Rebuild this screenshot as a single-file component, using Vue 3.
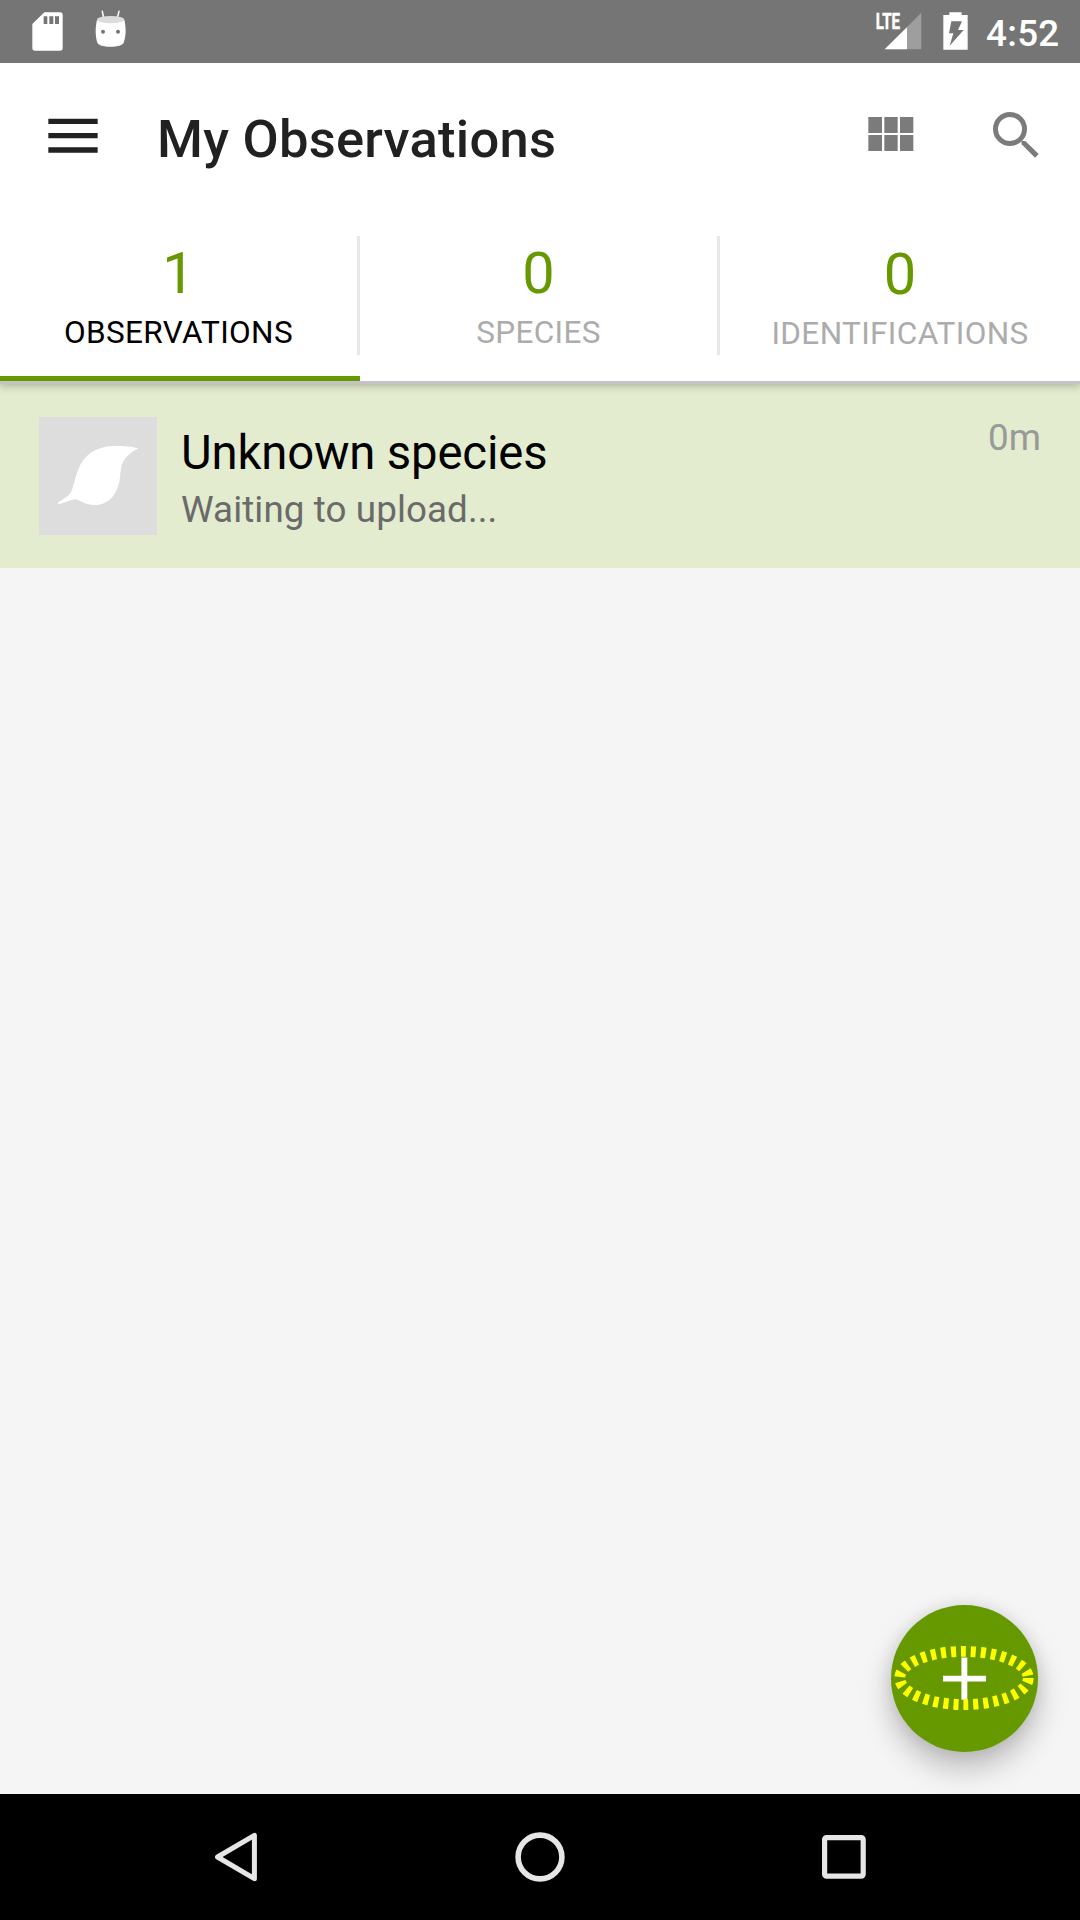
<script setup>
const tabs = [
  { count: 1, label: 'OBSERVATIONS', active: true },
  { count: 0, label: 'SPECIES' },
  { count: 0, label: 'IDENTIFICATIONS' },
]
const observations = [{ name: 'Unknown species', status: 'Waiting to upload...', age: '0m' }]
</script>

<template>
  <div class="screen">
    <header class="status">
      <svg class="sd" viewBox="96 36 93 117">
        <path fill="#fff" d="M133 37H180Q188 37 188 45V144Q188 152 180 152H105Q97 152 97 144V72Z" />
        <path fill="#757575" d="M131 49h11v23h-11zM148 49h12v23h-12zM165 49h12v23h-12z" />
      </svg>
      <svg class="droid" viewBox="285 30 93 114">
        <path d="M307 34L311 54M357 34L352 54" stroke="#fff" stroke-width="4.5" stroke-linecap="round" />
        <path fill="#fff" d="M291 60C286 78 285 108 292 128C294 135 310 140 331 140C353 140 369 135 371 128C379 108 378 78 373 60Z" />
        <ellipse cx="332" cy="59" rx="41" ry="11" fill="#dcdcdc" />
        <circle cx="309" cy="95" r="6" fill="#757575" />
        <circle cx="354" cy="95" r="6" fill="#757575" />
      </svg>
      <span class="grow"></span>
      <svg class="signal" viewBox="165 36 141 114">
        <path fill="#9e9e9e" d="M304 38V148H194Z" />
        <path fill="#fff" d="M261 82V148H194Z" />
        <text x="167" y="87" class="lte" textLength="73" lengthAdjust="spacingAndGlyphs">LTE</text>
      </svg>
      <svg class="battery" viewBox="369 36 75 114">
        <path fill="#fff" d="M388 37H425V45H443V149H370V45H388Z" />
        <path fill="#757575" d="M394 64H426L414 90H431L389 137L400 100H387Z" />
      </svg>
      <span class="clock">4:52</span>
    </header>

    <div class="toolbar">
      <svg class="menu" viewBox="144 354 150 108">
        <path fill="#212121" d="M145 356H293V372H145ZM145 399H293V415H145ZM145 442H293V458H145Z" />
      </svg>
      <h1>My Observations</h1>
      <span class="grow"></span>
      <svg class="grid" viewBox="144 348 138 108">
        <path fill="#7b7b7b" d="M145 351h41v48h-41zM193 351h40v48h-40zM240 351h40v48h-40zM145 405h41v48h-41zM193 405h40v48h-40zM240 405h40v48h-40z" />
      </svg>
      <svg class="search" viewBox="516 333 141 141" fill="none" stroke="#7b7b7b">
        <circle cx="570" cy="387" r="43.5" stroke-width="15" />
        <path d="M604 423H616L656 462L645 473L605 433Z" fill="#7b7b7b" stroke="none" />
      </svg>
    </div>

    <nav class="tabs">
      <div v-for="t in tabs" :key="t.label" class="tab" :class="{ active: t.active }">
        <div class="count">{{ t.count }}</div>
        <div class="label">{{ t.label }}</div>
      </div>
    </nav>

    <main class="content">
      <div v-for="o in observations" :key="o.name" class="row">
        <svg class="thumb" viewBox="117 141 354 354">
          <rect x="117" y="141" width="354" height="354" fill="#ddd" />
          <path fill="#fff" d="M173 399C188 386 208 380 215 362C223 340 227 318 235 297C252 256 285 230 340 228C375 227 400 230 415 236C397 243 370 262 364 290C359 315 362 343 344 371C328 396 307 405 280 405C253 404 240 390 228 388C214 388 196 399 176 402Z" />
        </svg>
        <div class="info">
          <div class="name">{{ o.name }}</div>
          <div class="state">{{ o.status }}</div>
        </div>
        <div class="age">{{ o.age }}</div>
      </div>
      <button class="fab" aria-label="Add">
        <svg viewBox="891 1605 147 147">
          <path fill="#fff" d="M961.4 1657.4H967.3V1675.7H986V1681.5H967.3V1699.7H961.4V1681.5H943V1675.7H961.4Z" />
          <ellipse cx="964" cy="1678" rx="64.3" ry="26.6" fill="none" stroke="#ff0" stroke-width="10.8" stroke-dasharray="5 5" />
        </svg>
      </button>
    </main>

    <footer class="navbar">
      <svg viewBox="0 0 60 60" fill="none" stroke="#e6e6e6" stroke-width="5">
        <path d="M48.4 8.3V51.7L11.5 30Z" stroke-linejoin="round" />
      </svg>
      <svg viewBox="0 0 60 60" fill="none" stroke="#e6e6e6" stroke-width="5.6">
        <circle cx="30" cy="30" r="21.9" />
      </svg>
      <svg viewBox="0 0 60 60" fill="none" stroke="#e6e6e6" stroke-width="5.2">
        <rect x="10.6" y="10.6" width="38.6" height="38.6" rx="2" />
      </svg>
    </footer>
  </div>
</template>

<style>
body { margin: 0; }
</style>

<style scoped>
.screen {
  width: 1080px;
  height: 1920px;
  display: flex;
  flex-direction: column;
  background: #f5f5f5;
  font-family: Roboto, sans-serif;
  overflow: hidden;
}
svg { display: block; flex: none; }
.grow { flex: 1; }
.status {
  height: 63px;
  flex: none;
  box-sizing: border-box;
  display: flex;
  align-items: flex-start;
  padding: 0 0 0 32px;
  background: #757575;
}
.sd { width: 31px; height: 39px; margin-top: 12px; }
.droid { width: 31px; height: 38px; margin: 10px 0 0 32px; }
.signal { width: 47px; height: 38px; margin-top: 12px; overflow: visible; }
.lte { font-size: 66px; font-weight: 700; fill: #fff; stroke: #fff; stroke-width: 1.5px; }
.battery { width: 25px; height: 38px; margin: 12px 18px 0 21px; }
.clock {
  width: 94px;
  font-size: 36.75px;
  font-weight: 500;
  line-height: 67px;
  letter-spacing: 0.3px;
  color: #fff;
}
.toolbar {
  height: 147px;
  flex: none;
  display: flex;
  align-items: flex-start;
  position: relative;
  z-index: 2;
  background: #fff;
}
.menu { width: 50px; height: 36px; margin: 55px 0 0 48px; }
h1 {
  margin: 0 0 0 59px;
  font-size: 52.5px;
  font-weight: 500;
  line-height: 152px;
  letter-spacing: 0.26px;
  color: #212121;
}
.grid { width: 46px; height: 36px; margin: 53px 78px 0 0; }
.search { width: 47px; height: 47px; margin: 48px 41px 0 0; }
.tabs {
  height: 171px;
  flex: none;
  display: flex;
  background: #fff;
  position: relative;
  z-index: 1;
  box-shadow: 0 3px 1px #c3c3c8, 0 4px 9px rgba(0, 0, 0, 0.3);
}
.tab {
  flex: none;
  width: 360px;
  box-sizing: border-box;
  padding: 29px 3px 0 0;
  text-align: center;
  color: #acacac;
  background: linear-gradient(#e8e8e8, #e8e8e8) no-repeat right 26px / 3px 119px;
  border-bottom: 5px solid transparent;
  background-origin: border-box;
}
.tab:last-child { padding: 30px 0 0; background: none; }
.tab.active { color: #000; border-bottom-color: #690; }
.count { font-size: 57.75px; line-height: 68px; color: #690; }
.label { margin-top: 6.5px; font-size: 31.5px; line-height: 38px; letter-spacing: 0.36px; }
.content { flex: 1; position: relative; overflow: hidden; }
.row {
  height: 187px;
  box-sizing: border-box;
  padding: 36px 39px 0;
  display: flex;
  background: #e3ecce;
}
.thumb { width: 118px; height: 118px; }
.info { flex: 1; margin-left: 24px; }
.name { font-size: 47.25px; line-height: 56px; margin-top: 8px; letter-spacing: -0.15px; color: #000; }
.state { font-size: 36.75px; line-height: 44px; margin-top: 7px; letter-spacing: 0.1px; color: #6a6a6a; }
.age { font-size: 36.75px; line-height: 42px; color: #999; }
.fab {
  position: absolute;
  right: 42px;
  bottom: 42px;
  width: 147px;
  height: 147px;
  padding: 0;
  border: 0;
  border-radius: 50%;
  background: #690;
  box-shadow: 0 16px 30px rgba(0, 0, 0, 0.24), 0 0 16px rgba(0, 0, 0, 0.09);
}
.navbar {
  height: 126px;
  flex: none;
  display: flex;
  justify-content: space-between;
  align-items: center;
  padding: 0 206px;
  background: #000;
}
.navbar svg { width: 60px; height: 60px; }
</style>
